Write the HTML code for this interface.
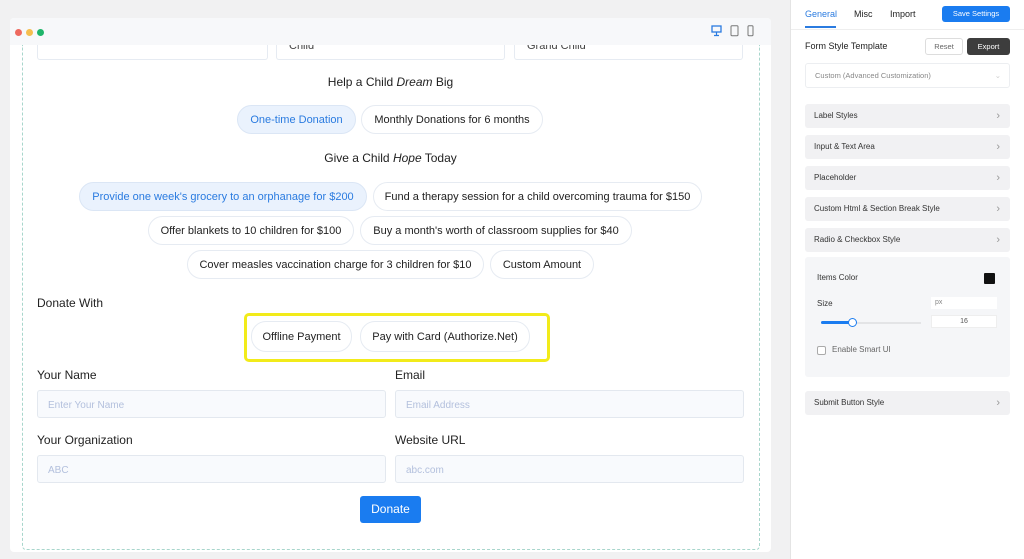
<!DOCTYPE html>
<html><head><style>
*{box-sizing:border-box;margin:0;padding:0}
body{width:1024px;height:559px;background:#f1f1f2;font-family:"Liberation Sans",sans-serif;position:relative;overflow:hidden;color:#1e1e1e}
.a{position:absolute;white-space:nowrap}
.pill{position:absolute;height:29px;border:1px solid #e6ebf2;border-radius:15px;background:#fff;font-size:11px;line-height:28px;text-align:center;color:#222;white-space:nowrap}
.pill.sel{background:#eaf2fd;color:#2a7be0;border-color:#dbe6f5}
.inp{position:absolute;height:28px;border:1px solid #e3e8ef;border-radius:3px;background:#f8fafd;font-size:10px;color:#b3c0dd;padding-left:10px;line-height:29px}
.lbl{position:absolute;font-size:12px;color:#222;white-space:nowrap}
.acc{position:absolute;left:805px;width:205px;height:24px;background:#f1f1f3;border-radius:3px;font-size:8px;color:#333;padding-left:9px;line-height:24px}
.acc:after{content:"›";position:absolute;right:10px;top:0;font-size:11px;color:#999}
</style></head><body>
<div class="a" style="left:10px;top:18px;width:761px;height:534px;background:#fff;border-radius:4px"></div>
<div class="a" style="left:10px;top:18px;width:761px;height:27px;background:#f7f8fa;border-radius:4px 4px 0 0"></div>
<div class="a" style="left:15px;top:29px;width:7px;height:7px;border-radius:50%;background:#ee6a5f"></div>
<div class="a" style="left:26px;top:29px;width:7px;height:7px;border-radius:50%;background:#f5be4f"></div>
<div class="a" style="left:37px;top:29px;width:7px;height:7px;border-radius:50%;background:#1fb56a"></div>
<svg class="a" style="left:711px;top:25px" width="48" height="12"><rect x="1" y="1" width="9" height="6" fill="none" stroke="#2a7be0" stroke-width="1.3"/><path d="M5.5 7v3M3 10.5h5" stroke="#2a7be0" stroke-width="1.2"/><rect x="20" y="0.7" width="7" height="10" rx="1" fill="none" stroke="#777"/><rect x="37" y="0.7" width="5" height="10" rx="1" fill="none" stroke="#777"/></svg>
<div class="a" style="left:22px;top:45px;width:738px;height:505px;border:1px dashed #a8d6cc;border-top:none;border-radius:0 0 4px 4px"></div>
<div class="a" style="left:37px;top:45px;width:231px;height:15px;border:1px solid #e6ebf2;border-top:none;border-radius:0 0 3px 3px"></div>
<div class="a" style="left:276px;top:45px;width:229px;height:15px;border:1px solid #e6ebf2;border-top:none;border-radius:0 0 3px 3px;font-size:11px;line-height:2px;padding-left:12px;overflow:hidden;color:#444">Child</div>
<div class="a" style="left:514px;top:45px;width:229px;height:15px;border:1px solid #e6ebf2;border-top:none;border-radius:0 0 3px 3px;font-size:11px;line-height:2px;padding-left:12px;overflow:hidden;color:#444">Grand Child</div>
<div class="a" style="left:0;width:781px;top:75px;text-align:center;font-size:12px">Help a Child <i>Dream</i> Big</div>
<div class="pill sel" style="left:237px;top:105px;width:119px">One-time Donation</div>
<div class="pill" style="left:361px;top:105px;width:182px">Monthly Donations for 6 months</div>
<div class="a" style="left:0;width:781px;top:151px;text-align:center;font-size:12px">Give a Child <i>Hope</i> Today</div>
<div class="pill sel" style="left:79px;top:182px;width:288px">Provide one week's grocery to an orphanage for $200</div>
<div class="pill" style="left:373px;top:182px;width:329px">Fund a therapy session for a child overcoming trauma for $150</div>
<div class="pill" style="left:148px;top:216px;width:206px">Offer blankets to 10 children for $100</div>
<div class="pill" style="left:360px;top:216px;width:272px">Buy a month's worth of classroom supplies for $40</div>
<div class="pill" style="left:187px;top:250px;width:297px">Cover measles vaccination charge for 3 children for $10</div>
<div class="pill" style="left:490px;top:250px;width:104px">Custom Amount</div>
<div class="lbl" style="left:37px;top:296px">Donate With</div>
<div class="a" style="left:244px;top:313px;width:306px;height:49px;border:3px solid #f2eb1a;border-radius:5px"></div>
<div class="pill" style="left:251px;top:321px;width:101px;height:31px;line-height:30px">Offline Payment</div>
<div class="pill" style="left:360px;top:321px;width:170px;height:31px;line-height:30px">Pay with Card (Authorize.Net)</div>
<div class="lbl" style="left:37px;top:368px">Your Name</div>
<div class="lbl" style="left:395px;top:368px">Email</div>
<div class="inp" style="left:37px;top:390px;width:349px">Enter Your Name</div>
<div class="inp" style="left:395px;top:390px;width:349px">Email Address</div>
<div class="lbl" style="left:37px;top:433px">Your Organization</div>
<div class="lbl" style="left:395px;top:433px">Website URL</div>
<div class="inp" style="left:37px;top:455px;width:349px">ABC</div>
<div class="inp" style="left:395px;top:455px;width:349px">abc.com</div>
<div class="a" style="left:360px;top:496px;width:61px;height:27px;background:#1a7cf0;border-radius:3px;color:#fff;font-size:12px;text-align:center;line-height:27px">Donate</div>

<div class="a" style="left:790px;top:0;width:234px;height:559px;background:#fff;border-left:1px solid #e4e4e4"></div>
<div class="a" style="left:805px;top:9px;font-size:9px;color:#2a7be0">General</div>
<div class="a" style="left:805px;top:26px;width:31px;height:2px;background:#2a7be0"></div>
<div class="a" style="left:854px;top:9px;font-size:9px;color:#222">Misc</div>
<div class="a" style="left:890px;top:9px;font-size:9px;color:#222">Import</div>
<div class="a" style="left:942px;top:6px;width:68px;height:16px;background:#1a7cf0;border-radius:3px;color:#fff;font-size:7.5px;text-align:center;line-height:16px">Save Settings</div>
<div class="a" style="left:791px;top:29px;width:233px;height:1px;background:#eee"></div>
<div class="a" style="left:805px;top:41px;font-size:9px;color:#222">Form Style Template</div>
<div class="a" style="left:925px;top:38px;width:38px;height:17px;border:1px solid #ddd;border-radius:3px;font-size:7.5px;color:#666;text-align:center;line-height:15px">Reset</div>
<div class="a" style="left:967px;top:38px;width:43px;height:17px;background:#3d3d3d;border-radius:3px;font-size:7.5px;color:#fff;text-align:center;line-height:17px">Export</div>
<div class="a" style="left:805px;top:63px;width:205px;height:25px;border:1px solid #eceef1;border-radius:3px;font-size:7.5px;color:#888;padding-left:9px;line-height:23px">Custom (Advanced Customization)<span style="position:absolute;right:8px;color:#ccc">⌄</span></div>
<div class="acc" style="top:104px">Label Styles</div>
<div class="acc" style="top:135px">Input &amp; Text Area</div>
<div class="acc" style="top:166px">Placeholder</div>
<div class="acc" style="top:197px">Custom Html &amp; Section Break Style</div>
<div class="acc" style="top:228px">Radio &amp; Checkbox Style</div>
<div class="a" style="left:805px;top:257px;width:205px;height:120px;background:#f5f6f8;border-radius:3px"></div>
<div class="a" style="left:817px;top:273px;font-size:8px;color:#333">Items Color</div>
<div class="a" style="left:984px;top:273px;width:11px;height:11px;background:#111;border-radius:1px"></div>
<div class="a" style="left:817px;top:299px;font-size:8px;color:#333">Size</div>
<div class="a" style="left:931px;top:297px;width:66px;height:12px;background:#fff;font-size:7px;color:#888;padding-left:4px;line-height:11px">px</div>
<div class="a" style="left:821px;top:322px;width:100px;height:2px;background:#e3e4e6"></div>
<div class="a" style="left:821px;top:321px;width:32px;height:3px;background:#1a7cf0;border-radius:2px"></div>
<div class="a" style="left:848px;top:318px;width:9px;height:9px;border:1.5px solid #1a7cf0;border-radius:50%;background:#fff"></div>
<div class="a" style="left:931px;top:315px;width:66px;height:13px;background:#fff;border:1px solid #eee;font-size:7px;color:#555;text-align:center;line-height:11px">16</div>
<div class="a" style="left:817px;top:346px;width:9px;height:9px;border:1px solid #aaa;border-radius:2px;background:#fff"></div>
<div class="a" style="left:832px;top:345px;font-size:8px;color:#666">Enable Smart UI</div>
<div class="acc" style="top:391px">Submit Button Style</div>
</body></html>
